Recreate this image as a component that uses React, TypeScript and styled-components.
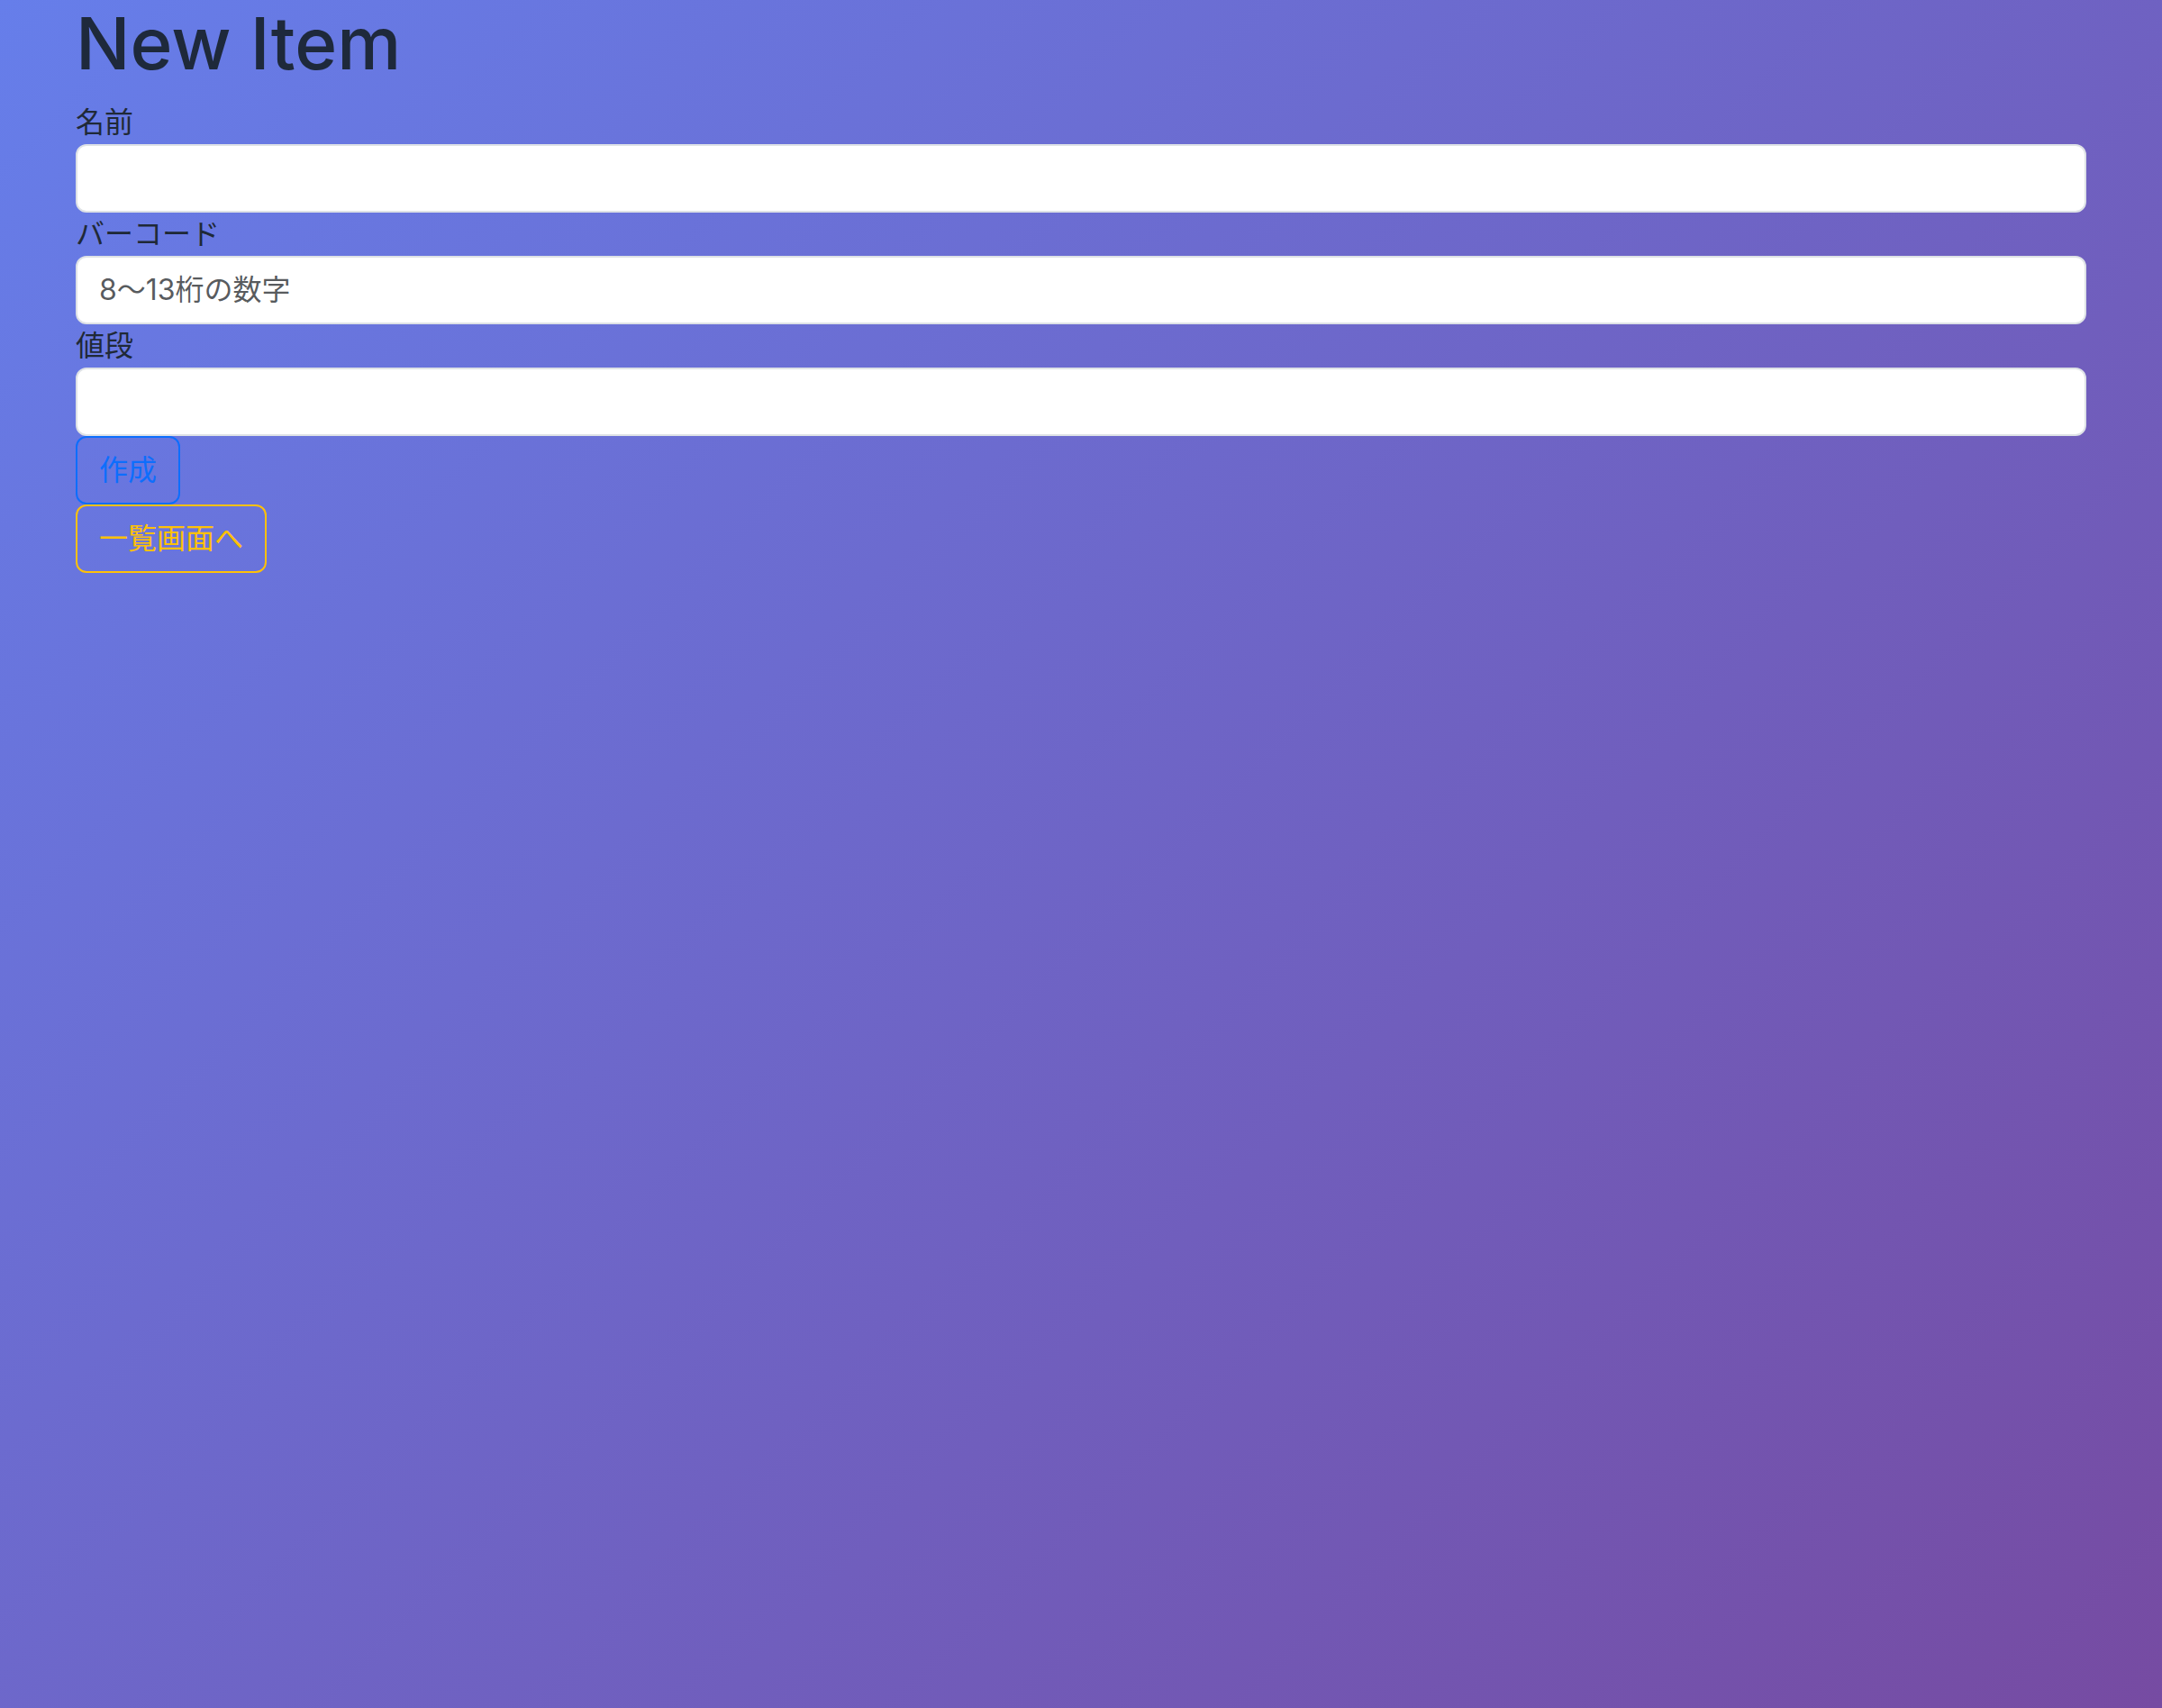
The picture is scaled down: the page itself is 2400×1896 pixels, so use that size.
import styled, { createGlobalStyle } from "styled-components";

const GlobalStyle = createGlobalStyle`
  *, *::before, *::after {
    box-sizing: border-box;
  }
  html, body {
    margin: 0;
    padding: 0;
  }
  body {
    min-height: 100vh;
    background: linear-gradient(135deg, #667eea 0%, #764ba2 100%);
    font-family: Inter, "Noto Sans CJK JP", sans-serif;
    font-size: 32px;
    line-height: 1.5;
    color: #1f2937;
  }
`;

const Container = styled.main`
  width: 2280px;
  margin: 0 auto;
  padding: 0 24px;
`;

const Title = styled.h1`
  margin: 0 0 16px;
  font-size: 80px;
  font-weight: 500;
  line-height: 1.2;
  color: #1e293b;
`;

const Field = styled.div`
  display: flex;
  flex-direction: column;
`;

const Label = styled.label`
  font-size: 32px;
  line-height: 48px;
  color: #1f2937;
`;

const Input = styled.input`
  display: block;
  width: 100%;
  padding: 12px 24px;
  font-family: inherit;
  font-size: 32px;
  line-height: 1.5;
  color: #212529;
  background: #fff;
  border: 2px solid #dee2e6;
  border-radius: 12px;
  outline: none;

  &::placeholder {
    color: rgba(33, 37, 41, 0.75);
  }
`;

const Actions = styled.div`
  display: flex;
  flex-direction: column;
  align-items: flex-start;
`;

const OutlineButton = styled.button<{ $tone: string }>`
  display: inline-block;
  padding: 12px 24px;
  font-family: inherit;
  font-size: 32px;
  line-height: 1.5;
  color: ${(p) => p.$tone};
  background: transparent;
  border: 2px solid ${(p) => p.$tone};
  border-radius: 12px;
  cursor: pointer;
`;

export default function App() {
  return (
    <>
      <GlobalStyle />
      <Container>
        <Title>New Item</Title>
        <form onSubmit={(e) => e.preventDefault()}>
          <Field>
            <Label htmlFor="name">名前</Label>
            <Input id="name" type="text" />
          </Field>
          <Field>
            <Label htmlFor="barcode">バーコード</Label>
            <Input id="barcode" type="text" placeholder="8〜13桁の数字" />
          </Field>
          <Field>
            <Label htmlFor="price">値段</Label>
            <Input id="price" type="text" />
          </Field>
          <Actions>
            <OutlineButton type="submit" $tone="#0d6efd">
              作成
            </OutlineButton>
            <OutlineButton type="button" $tone="#ffc107">
              一覧画面へ
            </OutlineButton>
          </Actions>
        </form>
      </Container>
    </>
  );
}
